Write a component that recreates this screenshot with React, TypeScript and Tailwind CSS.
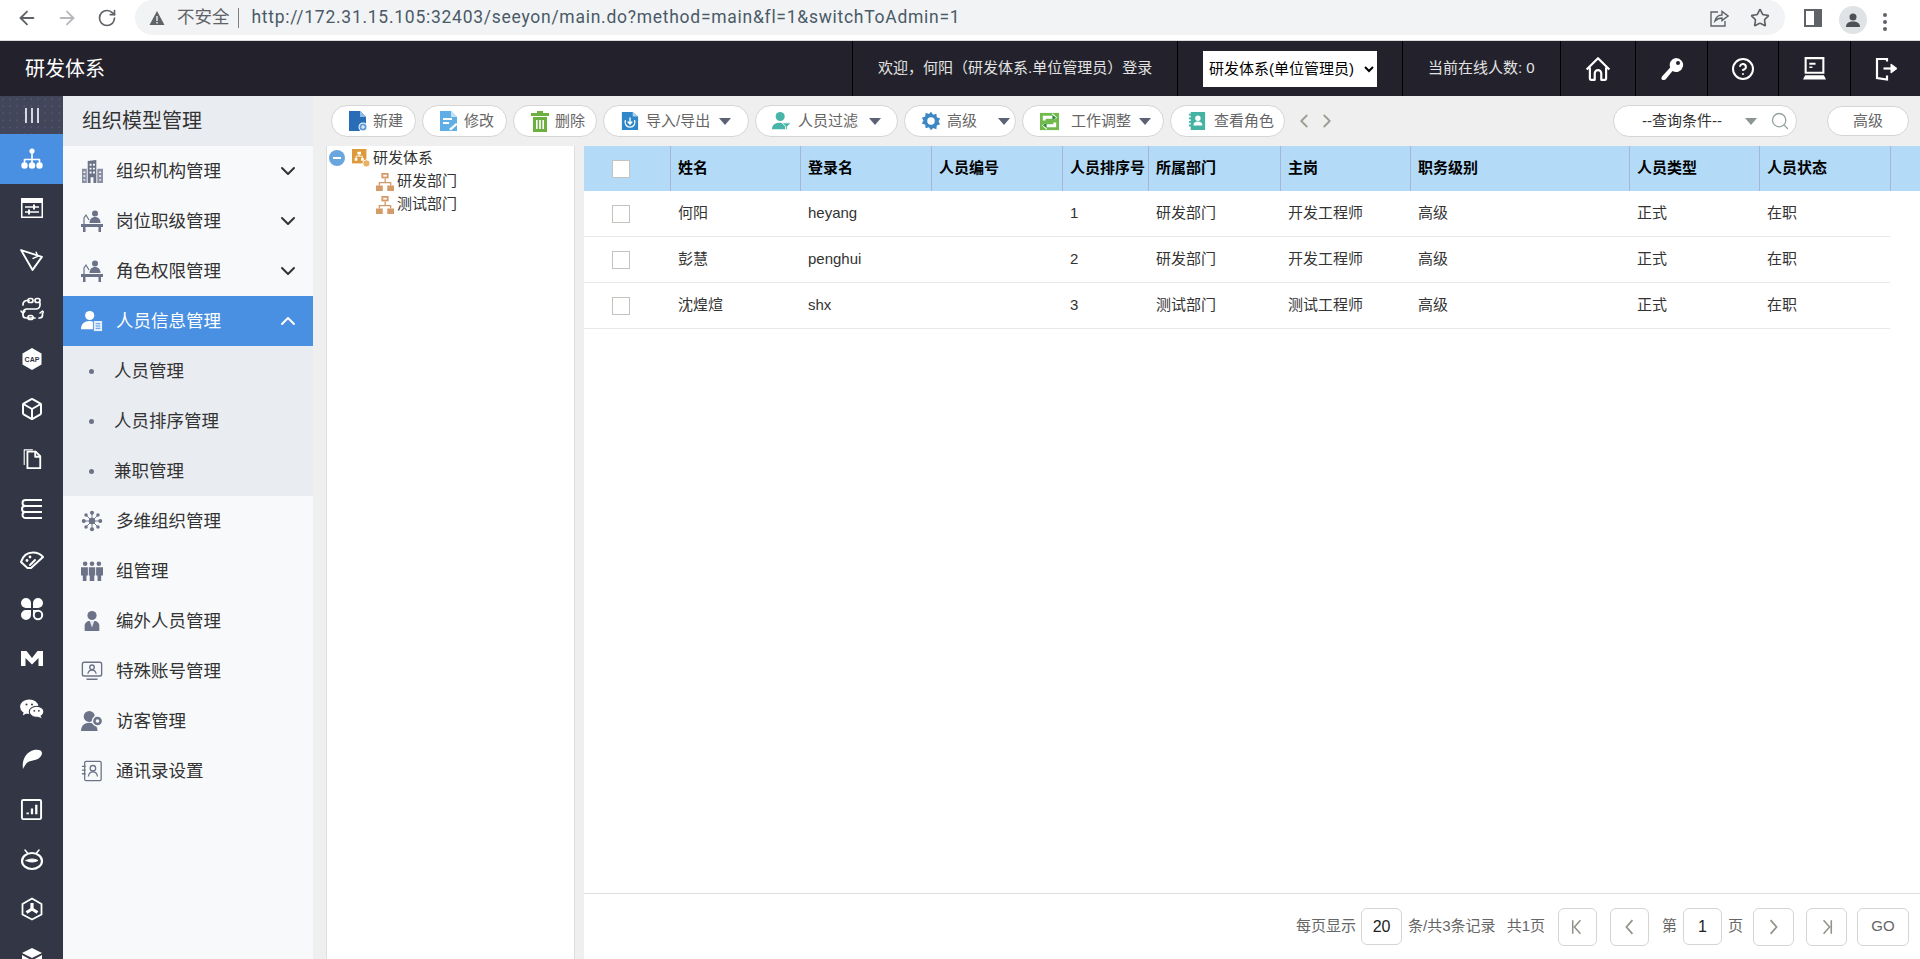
import React from "react";
import { ArrowLeft, ArrowRight, RotateCw, Star, ChevronDown, ChevronUp, ChevronLeft, ChevronRight, Search, Box, CircleHelp } from "lucide-react";

const FONT = "font-['Liberation_Sans','Noto_Sans_CJK_SC',sans-serif]";

const S = ({ children, className = "", size = 24 }: { children: React.ReactNode; className?: string; size?: number }) => (
  <svg viewBox="0 0 24 24" width={size} height={size} className={className} fill="none" stroke="currentColor" strokeWidth={2} strokeLinecap="round" strokeLinejoin="round">
    {children}
  </svg>
);

/* rail icons */
const RailOrg = () => <S><circle cx="12" cy="4" r="2.6" fill="currentColor" stroke="none" /><path d="M12 6v6M4.5 16v-3.5h15V16M12 12v4" strokeWidth={1.6} /><circle cx="4.5" cy="18.5" r="3.2" fill="currentColor" stroke="none" /><circle cx="12" cy="18.5" r="3.2" fill="currentColor" stroke="none" /><circle cx="19.5" cy="18.5" r="3.2" fill="currentColor" stroke="none" /></S>;
const RailPanel = () => <svg viewBox="0 0 22 22" width="22" height="22"><path d="M0 0h22v20H0z" fill="#fff" /><path d="M1.500 5h19v13.500h-19z" fill="#333745" /><path d="M4 9h14M4 14h14" stroke="#fff" strokeWidth="1.500" /><path d="M13 6.500v5M8 11.500v5" stroke="#fff" strokeWidth="2" /></svg>;
const RailPen = () => <S size={25}><path d="M2 3l20 6.500-9 12.500z" strokeWidth={1.8} /><path d="M16.500 5l1.500 4-4.500 2" strokeWidth={1.4} /></S>;
const RailLink = () => <S><rect x="8" y="1.500" width="5" height="4" rx="2" strokeWidth={1.7} /><rect x="15" y="1.500" width="5" height="4" rx="2" strokeWidth={1.7} /><path d="M9 3.500H7a4 4 0 0 0-4 4v.5M20 6v2a4 4 0 0 1-4 4H7a4 4 0 0 0-4 4v2a3 3 0 0 0 3 3h9M19 21h.5a3 3 0 0 0 3-3v-2" strokeWidth={1.700} /><rect x="8" y="18.500" width="5" height="4" rx="2" strokeWidth={1.7} /><path d="M1 14l2 2.500L5 14M20 16l2.500-2 2 2" strokeWidth={1.5} /></S>;
const RailCap = () => <svg viewBox="0 0 24 24" width="24" height="24"><path d="M12 1l9.5 5.500v11L12 23l-9.500-5.500v-11z" fill="#fff" /><text x="12" y="15" textAnchor="middle" fontSize="7" fontWeight="700" fill="#333745" fontFamily="Liberation Sans">CAP</text></svg>;
const RailFiles = () => <S size={22}><path d="M7 4h9l5 5v13H7z" /><path d="M15.500 4v5.500H21" /><path d="M3.500 18V2h9" strokeWidth={1.2} /></S>;
const RailStack = () => <S><path d="M22 3H5.500a2.700 2.700 0 0 0 0 6H22M22 9H5a3 3 0 0 0 0 6h17M22 15H5.500a2.700 2.700 0 0 0 0 6H22" strokeLinecap="butt" /></S>;
const RailGauge = () => <S><path d="M1 15C3 8.500 8 5.500 13 5.500c4 0 7.500 1.500 10 4.500L11 21H7.500z" /><circle cx="7" cy="13.500" r="1.400" fill="currentColor" stroke="none" /><circle cx="10" cy="10" r="1.400" fill="currentColor" stroke="none" /><path d="M10 18l5-5" /></S>;
const RailClover = () => <svg viewBox="0 0 24 24" width="24" height="24"><path d="M11 11H6a5 5 0 1 1 5-5zM13 11V6a5 5 0 1 1 5 5zM11 13v5a5 5 0 1 1-5-5z" fill="#fff" /><circle cx="18" cy="18" r="4.200" fill="none" stroke="#fff" strokeWidth="2" /><path d="M13 13h5v1h-4v4h-1z" fill="#fff" /></svg>;
const RailM = () => <svg viewBox="0 0 24 24" width="24" height="24"><path d="M1 4h5.500l5.500 7 5.500-7H23v15h-4.500V11l-6.500 6.500L5.500 11v8H1z" fill="#fff" /></svg>;
const RailWx = () => <svg viewBox="0 0 26 24" width="24" height="22"><ellipse cx="10" cy="9.500" rx="10" ry="8" fill="#fff" /><path d="M4 15l-1 4 5-3z" fill="#fff" /><ellipse cx="18" cy="15" rx="8" ry="6" fill="#fff" stroke="#333745" strokeWidth="1.200" /><path d="M22 19l1.500 3-5-2z" fill="#fff" /><circle cx="7" cy="7" r="1.100" fill="#333745" /><circle cx="13" cy="7" r="1.100" fill="#333745" /><circle cx="15.500" cy="14" r="1" fill="#333745" /><circle cx="20.500" cy="14" r="1" fill="#333745" /></svg>;
const RailFeather = () => <svg viewBox="0 0 24 24" width="24" height="24"><path d="M3 22c-1.500-9 3-17 11-19 4-1 8 0 8 3 0 3-3 6-7 7-4 1-7 1-9 4-1.300 1.700-2 3-3 5z" fill="#fff" /></svg>;
const RailChart = () => <S size={23}><rect x="2" y="2" width="20" height="20" rx="1.500" /><path d="M8 17v-2M12.500 17v-6M17 17V7" strokeWidth={2.400} strokeLinecap="butt" /></S>;
const RailBot = () => <S><ellipse cx="12" cy="14" rx="10" ry="8" strokeWidth={2.200} /><path d="M6 13.500c4-2 8-2 12 0-4 2-8 2-12 0z" fill="currentColor" strokeWidth={1} /><path d="M7.500 6L5 3M16.500 6L19 3" strokeWidth={1.500} /></S>;
const RailHex = () => <S><path d="M12 1.500l9.500 5.500v10.500L12 22.500l-9.500-5V7z" strokeWidth={1.800} /><path d="M12 12V6M12 12l-5.500 3.500M12 12l5.500 3.500" strokeWidth={3.200} strokeLinecap="butt" /></S>;
const RailCube = () => <svg viewBox="0 0 24 24" width="24" height="24"><path d="M12 1l10 5-10 5L2 6z" fill="#fff" /><path d="M2 8l9.300 5v10L2 18zM22 8l-9.300 5v10L22 18z" fill="#fff" /></svg>;

/* sidebar icons */
const G = "#6c7287";
const SBuilding = () => <svg viewBox="0 0 22 24" width="21" height="23"><path d="M6 1l9-1v24H6z" fill={G} /><path d="M0 9h5v15H0zM16 9h6v15h-6z" fill="#8a90a3" /><path d="M8 4h2v2H8zM11.500 4h2v2h-2zM8 8h2v2H8zM11.500 8h2v2h-2zM8 12h2v2H8zM11.500 12h2v2h-2zM9 18h3v6H9zM1.500 12h2v1.500h-2zM1.500 16h2v1.500h-2zM1.500 20h2v1.500h-2zM18 12h2v1.500h-2zM18 16h2v1.500h-2zM18 20h2v1.500h-2z" fill="#f8f9fb" /></svg>;
const SDesk = () => <svg viewBox="0 0 22 22" width="22" height="22"><circle cx="14" cy="3.500" r="3" fill={G} /><path d="M8.500 13c0-4 2.500-6 5.500-6s5.500 2 5.500 6z" fill={G} /><path d="M0 14h22v3h-2v5h-2.500v-5h-13v5H2v-5H0z" fill={G} /><path d="M3 14V8l2-3 3 5" stroke={G} strokeWidth="1.200" fill="none" /></svg>;
const SPersonDoc = ({ c = "#fff" }: { c?: string }) => <svg viewBox="0 0 24 24" width="22" height="22"><circle cx="9.500" cy="6" r="5" fill={c} /><path d="M0 21c0-6 4-9 9-9 2 0 3 .5 4 1v8z" fill={c} /><path d="M14 12h9v11h-9z" fill="#e3f0fb" /><path d="M16 15h5M16 17.500h5M16 20h5" stroke="#4a90e2" strokeWidth="1" /></svg>;
const SMolecule = () => <svg viewBox="0 0 24 24" width="22" height="22" fill={G}><circle cx="12" cy="12" r="3.500" /><circle cx="12" cy="3" r="2.200" /><circle cx="12" cy="21" r="2.200" /><circle cx="3" cy="12" r="2.200" /><circle cx="21" cy="12" r="2.200" /><circle cx="5.500" cy="5.500" r="1.900" /><circle cx="18.500" cy="5.500" r="1.900" /><circle cx="5.500" cy="18.500" r="1.900" /><circle cx="18.500" cy="18.500" r="1.900" /><path d="M12 3v18M3 12h18M5.500 5.500l13 13M18.500 5.500l-13 13" stroke={G} strokeWidth="1" /></svg>;
const STeam = () => <svg viewBox="0 0 24 24" width="22" height="22" fill={G}><circle cx="4.500" cy="4" r="2.500" /><circle cx="12" cy="4" r="2.500" /><circle cx="19.500" cy="4" r="2.500" /><path d="M0 8h7.500v9H6v6H2v-6H0zM8.500 8h7v9h-1v6h-5v-6h-1zM16.500 8H24v9h-2v6h-4v-6h-1.500z" /></svg>;
const SSuit = () => <svg viewBox="0 0 24 24" width="22" height="22"><circle cx="12" cy="6" r="5" fill={G} /><path d="M4 23v-6c0-3 3-5 5-5h6c2 0 5 2 5 5v6z" fill={G} /><path d="M9.500 12l2.500 7 2.500-7z" fill="#e5e7ee" /></svg>;
const SMonitor = () => <svg viewBox="0 0 24 24" width="22" height="22" fill="none" stroke={G} strokeWidth="1.500"><rect x="1.500" y="2.500" width="21" height="15" rx="2" /><circle cx="12" cy="8" r="2.500" /><path d="M7.500 15c.5-3 2.500-4 4.500-4s4 1 4.500 4M6 21h12" /></svg>;
const SVisitor = () => <svg viewBox="0 0 24 24" width="22" height="22"><circle cx="9" cy="7" r="6" fill={G} /><path d="M0 23c0-6 4-9 9-9s9 3 9 9z" fill={G} /><circle cx="18" cy="12" r="5.500" fill={G} stroke="#f8f9fb" strokeWidth="1.500" /><circle cx="18" cy="12" r="2" fill="#f8f9fb" /></svg>;
const SBook = () => <svg viewBox="0 0 24 24" width="22" height="22" fill="none" stroke={G} strokeWidth="1.400"><rect x="4" y="1.500" width="18" height="21" rx="1.500" /><circle cx="13" cy="9" r="3" /><path d="M8 18c.5-3.500 2.500-5 5-5s4.500 1.500 5 5M1 7h4M1 11h4M1 15h4" /></svg>;

/* toolbar icons */
const TNew = () => <svg viewBox="0 0 20 22" width="20" height="22"><path d="M1 1h11l6 6v14H1z" fill="#2a6db7" /><path d="M12 1l6 6h-6z" fill="#8fbbe6" /><circle cx="15" cy="17" r="4.500" fill="#fff" /><circle cx="15" cy="17" r="3.500" fill="#5e9bd6" /><path d="M15 15v4M13 17h4" stroke="#fff" strokeWidth="1" /></svg>;
const TEdit = () => <svg viewBox="0 0 20 22" width="20" height="22"><path d="M1 1h11l6 6v14H1z" fill="#60aee6" /><path d="M12 1l6 6h-6z" fill="#c5e2f6" /><path d="M4 9h9M4 13h6" stroke="#fff" strokeWidth="1.800" /><path d="M10 19l7-6 1.500 1.500-6.500 6z" fill="#fff" /></svg>;
const TDel = () => <svg viewBox="0 0 20 22" width="20" height="22" fill="#6eb03f"><path d="M7 1h6v2h6v3H1V3h6z" /><path d="M3 7h14v15H3z" /><path d="M6 10h1.600v9H6zM9.200 10h1.600v9H9.200zM12.400 10H14v9h-1.600z" fill="#fff" /></svg>;
const TImport = () => <svg viewBox="0 0 20 22" width="18" height="20"><path d="M1 1h12l6 5v15H1z" fill="#2f86c8" /><path d="M13 1l6 5h-6z" fill="#a9d2ef" /><path d="M5 10a5.500 5.500 0 1 0 10 0" stroke="#fff" strokeWidth="1.500" fill="none" /><path d="M10 7v7M7.500 11.500L10 14.500l2.500-3" stroke="#fff" strokeWidth="1.500" fill="none" /></svg>;
const TFilter = () => <svg viewBox="0 0 22 22" width="20" height="20"><circle cx="9" cy="6" r="5" fill="#48b5a8" /><path d="M0 20c0-5 4-7 9-7 3 0 5 1 6 2v5z" fill="#48b5a8" /><path d="M11 13h10l-4 4v4l-2-1v-3z" fill="#48b5a8" stroke="#fff" strokeWidth="1" /></svg>;
const TGear = () => <svg viewBox="0 0 24 24" width="20" height="20"><path d="M12 1l2.500 3.500 4-1.300.4 4.300 4.100 1.500-2 3.500 2 3.500-4.100 1.500-.4 4.300-4-1.300L12 23l-2.500-3.500-4 1.300-.4-4.300L1 15l2-3.500L1 8l4.100-1.500.4-4.300 4 1.300z" fill="#3d87c4" /><circle cx="12" cy="12" r="4.500" fill="#fff" /></svg>;
const TSwap = () => <svg viewBox="0 0 22 22" width="21" height="21"><path d="M1 2h20v18H1z" fill="#72b94c" /><path d="M4 10V5h10V2l5 5-5 3V8H7v2zM18 12v5H8v3l-5-5 5-3v2h7v-2z" fill="#fff" /><path d="M14 4v6l4-3z" fill="#2c8f38" /><path d="M8 12v6l-4-3z" fill="#2c8f38" /></svg>;
const TRole = () => <svg viewBox="0 0 20 22" width="18" height="20"><path d="M3 1h16v20H3z" fill="#45b3a4" /><path d="M1 4h4M1 8h4M1 12h4M1 16h4" stroke="#45b3a4" strokeWidth="2" /><circle cx="11" cy="8" r="3" fill="#fff" /><path d="M6 16c0-3 2-4.500 5-4.500s5 1.500 5 4.500z" fill="#fff" /></svg>;
const Caret = ({ c = "#5d6175" }: { c?: string }) => <span className="w-0 h-0 border-x-[6px] border-x-transparent border-t-[7px]" style={{ borderTopColor: c }} />;

const TreeNode = () => <svg viewBox="0 0 20 20" width="18" height="18" className="shrink-0" fill="#d49a68"><path d="M6 0h8v6H6z" /><path d="M8 2h4v2H8z" fill="#fff" /><path d="M9.500 6h1.500v4h6v4h-1.500v-2.500h-11V14H3v-4h6.500z" /><path d="M0 14h7.500v6H0zM12.500 14H20v6h-7.500z" /></svg>;

const railIcons = [<RailPanel />, <RailPen />, <RailLink />, <RailCap />, <Box size={24} strokeWidth={2} />, <RailFiles />, <RailStack />, <RailGauge />, <RailClover />, <RailM />, <RailWx />, <RailFeather />, <RailChart />, <RailBot />, <RailHex />, <RailCube />];

const menu1 = [
  { icon: <SBuilding />, t: "组织机构管理" },
  { icon: <SDesk />, t: "岗位职级管理" },
  { icon: <SDesk />, t: "角色权限管理" },
];
const menu2 = [
  { icon: <SMolecule />, t: "多维组织管理" },
  { icon: <STeam />, t: "组管理" },
  { icon: <SSuit />, t: "编外人员管理" },
  { icon: <SMonitor />, t: "特殊账号管理" },
  { icon: <SVisitor />, t: "访客管理" },
  { icon: <SBook />, t: "通讯录设置" },
];

const tools = [
  { w: "w-[85px]", icon: <TNew />, t: "新建", g: "ml-[4px]" },
  { w: "w-[85px]", icon: <TEdit />, t: "修改", g: "ml-[4px]" },
  { w: "w-[84px]", icon: <TDel />, t: "删除", g: "ml-[4px]" },
  { w: "w-[146px]", icon: <TImport />, t: "导入/导出", caret: "ml-[9px]", g: "ml-[5px]" },
  { w: "w-[143px]", icon: <TFilter />, t: "人员过滤", caret: "ml-[11px]", g: "ml-[5px]" },
  { w: "w-[112px]", icon: <TGear />, t: "高级", caret: "ml-[21px]", g: "ml-[5px]" },
  { w: "w-[142px]", icon: <TSwap />, t: "工作调整", caret: "ml-[8px]", g: "ml-[11px]" },
  { w: "w-[115px]", icon: <TRole />, t: "查看角色", g: "ml-[6px]" },
];

const cols = ["w-[86px]", "w-[130px]", "w-[131px]", "w-[131px]", "w-[86px]", "w-[132px]", "w-[130px]", "w-[219px]", "w-[130px]", "w-[131px]", ""];
const heads = ["姓名", "登录名", "人员编号", "人员排序号", "所属部门", "主岗", "职务级别", "人员类型", "人员状态"];
const rows = [
  ["何阳", "heyang", "", "1", "研发部门", "开发工程师", "高级", "正式", "在职"],
  ["彭慧", "penghui", "", "2", "研发部门", "开发工程师", "高级", "正式", "在职"],
  ["沈煌煊", "shx", "", "3", "测试部门", "测试工程师", "高级", "正式", "在职"],
];

const PageBtn = ({ w, children, cls = "" }: { w: string; children: React.ReactNode; cls?: string }) => (
  <div className={`${w} h-[38px] rounded-md border border-[#d5d5d5] bg-white flex items-center justify-center text-[#8f948a] ${cls}`}>{children}</div>
);

export default function App() {
  return (
    <div className={`${FONT} w-[1920px] h-[959px] overflow-hidden flex flex-col bg-[#efefef] text-[15px] text-[#333]`}>
      {/* browser chrome */}
      <div className="h-[41px] shrink-0 bg-white border-b border-[#dcdcdc] flex">
        <div className="w-[135px] shrink-0 flex items-start pt-[7px] text-[#5f6368]">
          <ArrowLeft size={22} strokeWidth={2} className="ml-[16px]" />
          <ArrowRight size={22} strokeWidth={2} className="ml-[18px] text-[#b6b8bb]" />
          <RotateCw size={20} strokeWidth={2} className="ml-[19px] mt-[1px]" />
        </div>
        <div className="w-[1650px] h-[35px] bg-[#f1f3f4] rounded-full flex items-center">
          <svg viewBox="0 0 16 16" width="16" height="16" className="ml-[14px] shrink-0"><path d="M8 1l7.500 14H.5z" fill="#5f6368" /><path d="M7.300 6h1.400v5H7.300zM7.300 12h1.400v1.400H7.300z" fill="#f1f3f4" /></svg>
          <span className="ml-[12px] text-[#5f6368] text-[17.500px] leading-none">不安全</span>
          <span className="ml-[8px] w-px h-[20px] bg-[#7d8185]" />
          <span className="ml-[13px] text-[17.500px] text-[#4a5a68] font-['Roboto',sans-serif] tracking-[0.73px]">http://172.31.15.105:32403/seeyon/main.do?method=main&amp;fl=1&amp;switchToAdmin=1</span>
          <div className="ml-auto mr-[15px] flex items-center gap-[21px] text-[#5f6368]">
            <svg viewBox="0 0 20 20" width="20" height="20" fill="none" stroke="currentColor" strokeWidth="1.400"><path d="M9 4H2v14h14v-5" /><path d="M6 13c1-4 4-6 7-6V3.500L19 8l-6 4.500V10c-3 0-5 1-7 3z" /></svg>
            <Star size={20} strokeWidth={2} />
          </div>
        </div>
        <div className="flex-1 flex items-start pt-[6px] text-[#5f6368]">
          <svg viewBox="0 0 18 18" width="18" height="18" className="ml-[19px] mt-[3px]"><path d="M0 0h18v18H0z" fill="#5f6368" /><path d="M2 2h8v14H2z" fill="#fff" /></svg>
          <div className="ml-[17px] w-[28px] h-[28px] rounded-full bg-[#dfe3e6] flex items-center justify-center">
            <svg viewBox="0 0 16 16" width="16" height="16" fill="#4d5156"><circle cx="8" cy="5" r="3.500" /><path d="M1 15c0-4 3-5.500 7-5.500s7 1.500 7 5.500z" /></svg>
          </div>
          <div className="ml-[16px] mt-[7px] flex flex-col gap-[3px]">
            <span className="w-[4px] h-[4px] rounded-full bg-[#5f6368]" />
            <span className="w-[4px] h-[4px] rounded-full bg-[#5f6368]" />
            <span className="w-[4px] h-[4px] rounded-full bg-[#5f6368]" />
          </div>
        </div>
      </div>

      {/* app header */}
      <div className="h-[55px] shrink-0 bg-[#23222c] flex items-stretch text-[#e2e2e2]">
        <div className="w-[852px] pl-[25px] flex items-center text-white text-[20px]">研发体系</div>
        <div className="w-[325px] border-l border-black flex items-center pl-[25px] whitespace-nowrap">欢迎，何阳（研发体系.单位管理员）登录</div>
        <div className="w-[225px] border-l border-black flex items-center pl-[25px]">
          <select className="w-[174px] h-[36px] bg-white text-black text-[15px] pl-[2px]" defaultValue="a">
            <option value="a">研发体系(单位管理员)</option>
          </select>
        </div>
        <div className="w-[158px] border-l border-black flex items-center pl-[25px] whitespace-nowrap">当前在线人数: 0</div>
        <div className="w-[75px] border-l border-black flex items-center justify-center">
          <svg viewBox="0 0 24 24" width="26" height="26" fill="none" stroke="#fff" strokeWidth="2" strokeLinejoin="round"><path d="M1.500 12.500L12 2l10.500 10.500M4.500 10.500V21a1 1 0 0 0 1 1H9v-6a3 3 0 0 1 6 0v6h3.500a1 1 0 0 0 1-1V10.500" /></svg>
        </div>
        <div className="w-[72px] border-l border-black flex items-center justify-center">
          <svg viewBox="0 0 24 24" width="24" height="24" fill="#fff"><path d="M16 1a7 7 0 1 1-3.500 13L6 22c-1 1.300-3.500 1.500-4.300.2-.6-1-.2-2.200.5-3l8-8.700A7 7 0 0 1 16 1z" /><circle cx="18" cy="6" r="2" fill="#23222c" /></svg>
        </div>
        <div className="w-[71px] border-l border-black flex items-center justify-center text-white"><CircleHelp size={24} strokeWidth={2} /></div>
        <div className="w-[72px] border-l border-black flex items-center justify-center">
          <svg viewBox="0 0 24 24" width="25" height="25"><path d="M3.500 2h17v14h-17z" fill="none" stroke="#fff" strokeWidth="2" /><path d="M7 6.500h6v2H7zM7 10h3v1.500H7z" fill="#fff" /><path d="M3 18.500h18l2 4H1z" fill="#fff" /></svg>
        </div>
        <div className="flex-1 border-l border-black flex items-center justify-center">
          <svg viewBox="0 0 24 24" width="24" height="24" fill="none" stroke="#fff" strokeWidth="2.200"><path d="M13 4.500V2H3v19l10 1.500v-4" /><path d="M9.500 11.500h9" /><path d="M17 7l6 4.500-6 4.500z" fill="#fff" strokeWidth="1" /></svg>
        </div>
      </div>

      <div className="flex-1 min-h-0 flex">
        {/* rail */}
        <div className="w-[63px] shrink-0 bg-[#333745] flex flex-col text-white overflow-hidden">
          <div className="h-[38px] shrink-0 flex items-center justify-center gap-[4px] bg-[#41465a] bg-[radial-gradient(#4f5468_1px,transparent_1px)] bg-[size:7px_7px]">
            <span className="w-[2px] h-[15px] bg-[#d5d8e0]" /><span className="w-[2px] h-[15px] bg-[#d5d8e0]" /><span className="w-[2px] h-[15px] bg-[#d5d8e0]" />
          </div>
          <div className="h-[50px] shrink-0 bg-[#4a90e2] flex items-center justify-center"><RailOrg /></div>
          {railIcons.map((ic, i) => (
            <div key={i} className="h-[50px] shrink-0 flex items-center justify-center">{ic}</div>
          ))}
        </div>

        {/* sidebar */}
        <div className="w-[250px] shrink-0 bg-[#f8f9fb] flex flex-col text-[17.500px]">
          <div className="h-[50px] bg-[#e9ecf1] flex items-center pl-[19px] text-[20px] text-[#333]">组织模型管理</div>
          {menu1.map((m) => (
            <div key={m.t} className="h-[50px] flex items-center pl-[18px] pr-[13px]">
              <span className="w-[22px] flex justify-center">{m.icon}</span>
              <span className="ml-[13px]">{m.t}</span>
              <ChevronDown size={24} strokeWidth={2} className="ml-auto" />
            </div>
          ))}
          <div className="h-[50px] bg-[#4a90e2] text-white flex items-center pl-[18px] pr-[13px]">
            <span className="w-[22px] flex justify-center"><SPersonDoc /></span>
            <span className="ml-[13px]">人员信息管理</span>
            <ChevronUp size={24} strokeWidth={2} className="ml-auto" />
          </div>
          <div className="bg-[#e9ecf1]">
            {["人员管理", "人员排序管理", "兼职管理"].map((t) => (
              <div key={t} className="h-[50px] flex items-center pl-[26px]">
                <span className="w-[5px] h-[5px] rounded-full bg-[#6c7287]" />
                <span className="ml-[20px]">{t}</span>
              </div>
            ))}
          </div>
          {menu2.map((m) => (
            <div key={m.t} className="h-[50px] flex items-center pl-[18px]">
              <span className="w-[22px] flex justify-center">{m.icon}</span>
              <span className="ml-[13px]">{m.t}</span>
            </div>
          ))}
        </div>

        {/* content */}
        <div className="flex-1 min-w-0 flex flex-col">
          <div className="h-[50px] shrink-0 flex items-center pl-[18px] pr-[11px]">
            <div className="flex items-center gap-[6px]">
              {tools.map((b) => (
                <div key={b.t} className={`${b.w} h-[32px] rounded-full bg-white border border-[#d5d5d5] flex items-center pl-[15px] text-[#666] whitespace-nowrap`}>
                  <span className="w-[22px] flex justify-center shrink-0">{b.icon}</span>
                  <span className={b.g}>{b.t}</span>
                  {b.caret && <span className={`${b.caret} flex`}><Caret /></span>}
                </div>
              ))}
            </div>
            <div className="ml-[8px] flex items-center gap-[1px] text-[#9a9f93]">
              <ChevronLeft size={22} strokeWidth={2} />
              <ChevronRight size={22} strokeWidth={2} />
            </div>
            <div className="ml-auto w-[184px] h-[32px] rounded-full bg-white border border-[#d5d5d5] flex items-center text-[#333]">
              <span className="ml-[28px] whitespace-nowrap">--查询条件--</span>
              <span className="ml-[23px] flex"><Caret c="#8d9496" /></span>
              <Search size={20} strokeWidth={1.600} className="ml-[13px] text-[#94a39b]" />
            </div>
            <div className="ml-[30px] w-[82px] h-[30px] rounded-full bg-white border border-[#d5d5d5] flex items-center justify-center text-[#666]">高级</div>
          </div>

          <div className="flex-1 min-h-0 flex pl-[13px]">
            {/* tree */}
            <div className="w-[249px] shrink-0 bg-white border-x border-[#dedede] text-[15px] text-[#333]">
              <div className="h-[24px] flex items-center pl-[2px]">
                <span className="w-[16px] h-[16px] rounded-full bg-[#69a6dd] flex items-center justify-center"><span className="w-[8px] h-[2px] bg-white" /></span>
                <svg viewBox="0 0 20 20" width="18" height="18" className="ml-[7px]"><path d="M0 0h16v16H0z" fill="#dd9a3a" /><path d="M6 3h4v3H6zM3 10h3v3H3zM10 10h3v3h-3z" fill="#fff" /><path d="M8 6v2H4.500v2M8 8h3.500v2" stroke="#fff" fill="none" /><circle cx="16" cy="16" r="4" fill="#e8b266" stroke="#fff" /></svg>
                <span className="ml-[3px]">研发体系</span>
              </div>
              <div className="h-[23px] flex items-center pl-[49px]"><TreeNode /><span className="ml-[3px]">研发部门</span></div>
              <div className="h-[23px] flex items-center pl-[49px]"><TreeNode /><span className="ml-[3px]">测试部门</span></div>
            </div>

            {/* table */}
            <div className="flex-1 min-w-0 ml-[9px] bg-white flex flex-col">
              <div className="flex-1 min-h-0">
                <table className="table-fixed w-full border-separate border-spacing-0">
                  <colgroup>{cols.map((c, i) => <col key={i} className={c} />)}</colgroup>
                  <thead>
                    <tr className="h-[45px] bg-[#b3dbf8] text-black font-bold">
                      <th className="p-0 pl-[28px] pr-[40px] text-left"><span className="block w-[18px] h-[18px] bg-white border border-[#c4c4be]" /></th>
                      {heads.map((h) => <th key={h} className="p-0 pl-[7px] text-left font-bold border-l border-[#a5b7d6] whitespace-nowrap overflow-hidden">{h}</th>)}
                      <th className="p-0 border-l border-[#a5b7d6]" />
                    </tr>
                  </thead>
                  <tbody>
                    {rows.map((r) => (
                      <tr key={r[1]} className="h-[46px]">
                        <td className="p-0 pl-[28px] pr-[40px] border-b border-[#e8e8e8]"><span className="block w-[18px] h-[18px] bg-white border border-[#c4c4be]" /></td>
                        {r.map((c, i) => <td key={i} className="p-0 pl-[8px] border-b border-[#e8e8e8] whitespace-nowrap">{c}</td>)}
                        <td className="p-0" />
                      </tr>
                    ))}
                  </tbody>
                </table>
              </div>
              {/* footer */}
              <div className="h-[66px] shrink-0 border-t border-[#dedede] flex items-center justify-end pr-[11px] text-[#666] whitespace-nowrap">
                <span>每页显示</span>
                <div className="ml-[5px] w-[41px] h-[37px] rounded-md border border-[#d5d5d5] flex items-center justify-center text-[#222] text-[16px]">20</div>
                <span className="ml-[6px]">条/共3条记录</span>
                <span className="ml-[11px]">共1页</span>
                <PageBtn w="w-[39px]" cls="ml-[13px]"><svg viewBox="0 0 14 18" width="12" height="16" fill="none" stroke="currentColor" strokeWidth="1.800"><path d="M2 1v16M11 1L4 9l7 8" /></svg></PageBtn>
                <PageBtn w="w-[39px]" cls="ml-[13px]"><svg viewBox="0 0 14 18" width="12" height="16" fill="none" stroke="currentColor" strokeWidth="2"><path d="M11 1L4 9l7 8" /></svg></PageBtn>
                <span className="ml-[13px]">第</span>
                <div className="ml-[6px] w-[39px] h-[37px] rounded-md border border-[#d5d5d5] flex items-center justify-center text-[#222] text-[16px]">1</div>
                <span className="ml-[6px]">页</span>
                <PageBtn w="w-[41px]" cls="ml-[10px]"><svg viewBox="0 0 14 18" width="12" height="16" fill="none" stroke="currentColor" strokeWidth="2"><path d="M3 1l7 8-7 8" /></svg></PageBtn>
                <PageBtn w="w-[41px]" cls="ml-[12px]"><svg viewBox="0 0 14 18" width="12" height="16" fill="none" stroke="currentColor" strokeWidth="1.800"><path d="M12 1v16M3 1l7 8-7 8" /></svg></PageBtn>
                <PageBtn w="w-[52px]" cls="ml-[10px] text-[#666]">GO</PageBtn>
              </div>
            </div>
          </div>
        </div>
      </div>
    </div>
  );
}
